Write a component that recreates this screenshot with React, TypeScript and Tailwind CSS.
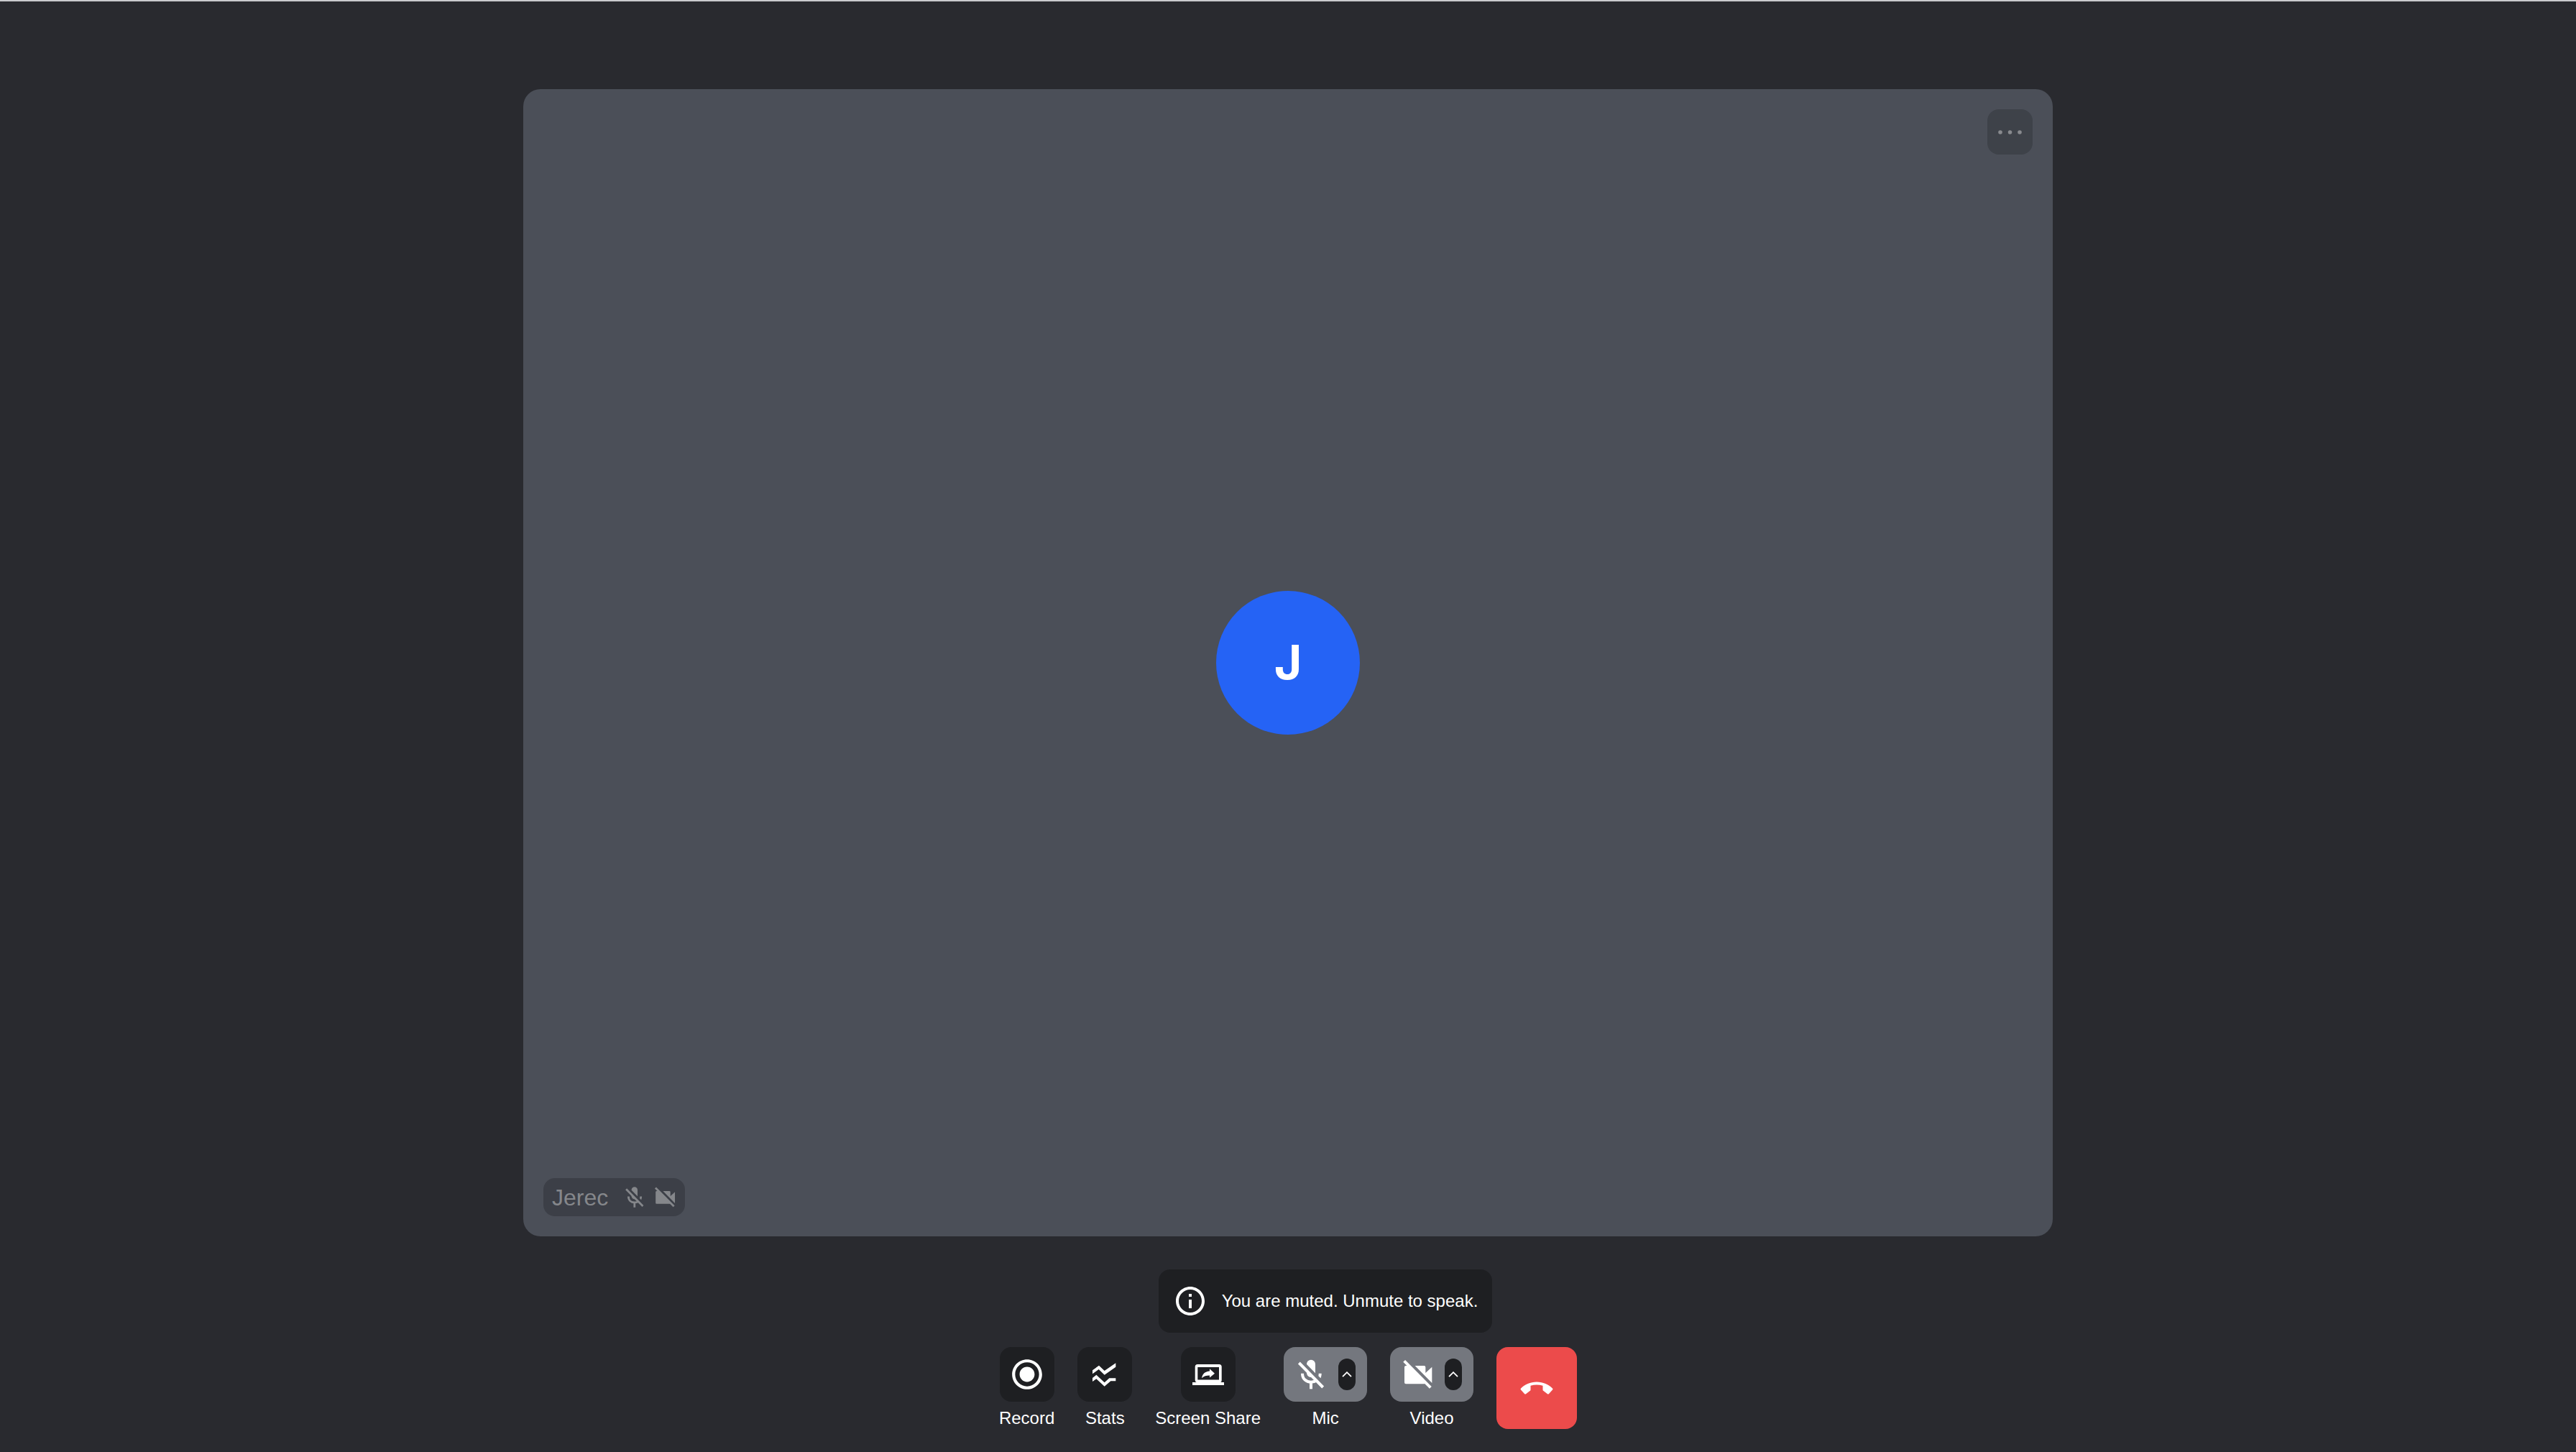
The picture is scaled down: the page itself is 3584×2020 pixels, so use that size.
import React from "react";

function MicOff({ className }: { className: string }) {
  return (
    <svg viewBox="0 3 150 150" fill="currentColor" aria-hidden="true" className={className}>
      <path d="M54 35a18 18 0 0 1 36 0V73L54 36z" />
      <path d="M54 62v11a18 18 0 0 0 24 16z" />
      <path d="M104 74h12c0 8-1.500 14-4 20l-9-9q1-5 1-11z" />
      <path d="M66 110h12v29H66z" />
      <path
        d="M36 74C36 97 52 110 72 110C82 110 90 107 97 102M22 30L122 132"
        fill="none"
        stroke="currentColor"
        strokeWidth="12"
      />
    </svg>
  );
}

function VideoOff({ className }: { className: string }) {
  return (
    <svg viewBox="0 3 150 150" fill="currentColor" aria-hidden="true" className={className}>
      <path d="M62 42H100q6 0 6 6V72L133 47V114z" />
      <path d="M24 42H36L106 113q-1 5-6 5H24q-6 0-6-6V48q0-6 6-6z" />
      <path d="M17 22L127 133" stroke="currentColor" strokeWidth="12" />
    </svg>
  );
}

function Action({ label, children }: { label: string; children: React.ReactNode }) {
  return (
    <button type="button" className="flex flex-col items-center gap-2 text-2xl leading-[30px]">
      <span className="flex size-[76px] items-center justify-center rounded-2xl bg-[#1e1f22]">
        {children}
      </span>
      {label}
    </button>
  );
}

function DeviceControl({ label, children }: { label: string; children: React.ReactNode }) {
  return (
    <div className="flex flex-col items-center gap-2 text-2xl leading-[30px]">
      <div className="flex h-[76px] items-center gap-3 rounded-2xl bg-[#74777e] pr-4 pl-3.5">
        <button type="button" aria-label={label} className="flex items-center">
          {children}
        </button>
        <button
          type="button"
          aria-label={`${label} options`}
          className="flex h-11 w-6 items-center justify-center rounded-full bg-[#1e1f22]"
        >
          <svg viewBox="0 0 14 8" fill="none" stroke="currentColor" strokeWidth="1.8" className="w-3.5">
            <path d="M1 7.2 7 1.2l6 6" />
          </svg>
        </button>
      </div>
      <span>{label}</span>
    </div>
  );
}

export default function App() {
  return (
    <main className="flex min-h-screen flex-col items-center border-t-2 border-[#c9cacd] bg-[#292a2f] px-8 pt-[122px] font-['Liberation_Sans',Arial,sans-serif] text-white">
      <section
        aria-label="Jerec"
        className="relative flex aspect-[4/3] w-full max-w-[2128px] items-center justify-center rounded-3xl bg-[#4b4f58]"
      >
        <div className="flex size-[200px] items-center justify-center rounded-full bg-[#2563f5] pb-0.5 font-['Inter',sans-serif] text-[66px] leading-none font-bold">
          J
        </div>
        <button
          type="button"
          aria-label="More options"
          className="absolute top-7 right-7 flex size-[63px] items-center justify-center rounded-2xl bg-[#3e4249] text-[#888a8e]"
        >
          <svg viewBox="0 0 33 6" fill="currentColor" className="w-[33px]">
            <circle cx="3" cy="3" r="2.8" />
            <circle cx="16.5" cy="3" r="2.8" />
            <circle cx="30" cy="3" r="2.8" />
          </svg>
        </button>
        <div className="absolute bottom-7 left-7 flex h-[53px] items-center rounded-2xl bg-[#3c3f47] pr-2.5 pl-3 text-[32px] leading-none text-[#85878b]">
          <span className="mr-5">Jerec</span>
          <MicOff className="mr-[7px] size-[35px]" />
          <VideoOff className="size-[35px]" />
        </div>
      </section>

      <div
        role="status"
        className="mt-[46px] ml-[104px] flex h-[88px] items-center gap-5 rounded-2xl bg-[#1e1f22] px-5 text-2xl"
      >
        <svg viewBox="0 0 24 24" fill="currentColor" aria-hidden="true" className="size-12">
          <path d="M11 7h2v2h-2zm0 4h2v6h-2zm1-9C6.48 2 2 6.48 2 12s4.48 10 10 10 10-4.48 10-10S17.52 2 12 2zm0 18c-4.41 0-8-3.59-8-8s3.59-8 8-8 8 3.59 8 8-3.59 8-8 8z" />
        </svg>
        You are muted. Unmute to speak.
      </div>

      <div className="mt-5 mb-8 flex items-stretch gap-8">
        <Action label="Record">
          <svg viewBox="0 0 24 24" fill="currentColor" className="size-[50px]">
            <path d="M12 7c-2.76 0-5 2.24-5 5s2.24 5 5 5 5-2.24 5-5-2.24-5-5-5zm0-5C6.48 2 2 6.48 2 12s4.48 10 10 10 10-4.48 10-10S17.52 2 12 2zm0 18c-4.42 0-8-3.58-8-8s3.58-8 8-8 8 3.58 8 8-3.58 8-8 8z" />
          </svg>
        </Action>
        <Action label="Stats">
          <svg viewBox="0 0 108 108" fill="currentColor" className="size-9">
            <path d="M3 37L30 17L53 39L100 7V23L53 56L29 33L3 52z" />
            <path d="M3 69L19 56L53 88L73 70H100V82H79L53 104L19 73L3 84z" />
          </svg>
        </Action>
        <Action label="Screen Share">
          <svg viewBox="0 0 44 29" fill="currentColor" className="w-11">
            <path
              fillRule="evenodd"
              d="M7.200 0h30q3.500 0 3.500 3.500V22q0 3-2 3H44v4H0v-4H5.700q-2-.5-2-3V3.500Q3.700 0 7.200 0zM7.300 4V21.600H37V4z"
            />
            <path d="M24 6.300 31 12.700 24 18.500V15.500c-5 0-8 1-11 3.800 1-6 4.500-9.300 11-9.800z" />
          </svg>
        </Action>
        <DeviceControl label="Mic">
          <MicOff className="size-[50px]" />
        </DeviceControl>
        <DeviceControl label="Video">
          <VideoOff className="size-[50px]" />
        </DeviceControl>
        <button
          type="button"
          aria-label="Leave call"
          className="flex w-28 items-center justify-center rounded-2xl bg-[#ec4b4b]"
        >
          <svg viewBox="0 0 46 18" fill="currentColor" className="w-[46px]">
            <path d="M23 .5C14 .5 6.500 4 1 9.500q-1 1 0 2L6 17q1 1 2 .300L13.500 13q1-.500 1-1.500V5.700Q23 3.500 31.500 5.700v5.800q0 1 1 1.500L38 17.300q1 .700 2-.300l5-5.500q1-1 0-2C39.500 4 32 .5 23 .5z" />
          </svg>
        </button>
      </div>
    </main>
  );
}
